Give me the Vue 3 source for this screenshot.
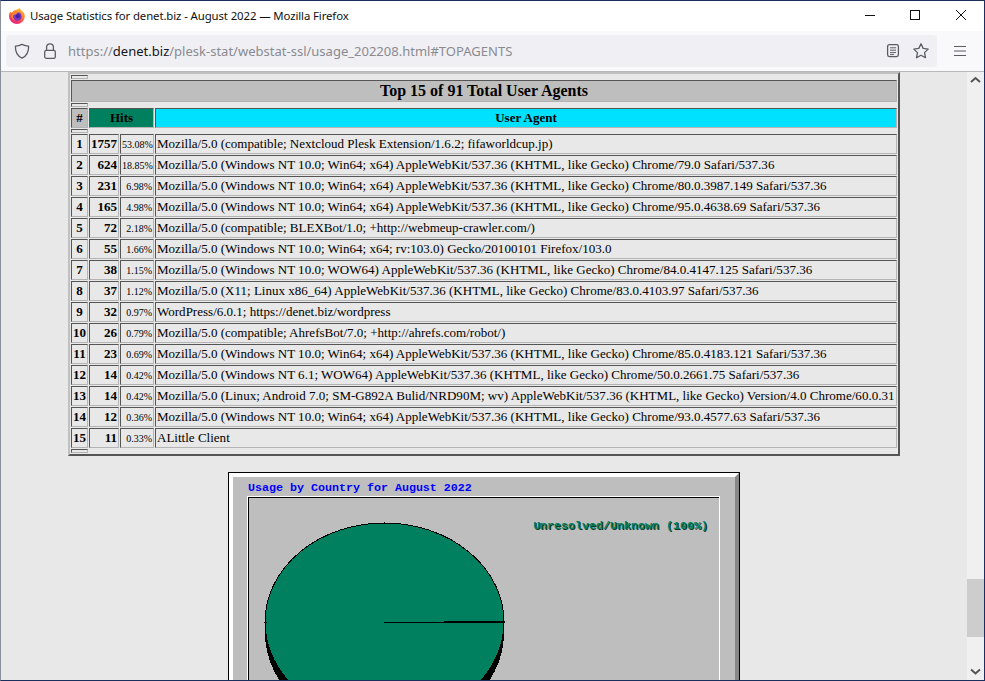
<script setup>
const rows = [
  [1, 1757, '53.08%', 'Mozilla/5.0 (compatible; Nextcloud Plesk Extension/1.6.2; fifaworldcup.jp)'],
  [2, 624, '18.85%', 'Mozilla/5.0 (Windows NT 10.0; Win64; x64) AppleWebKit/537.36 (KHTML, like Gecko) Chrome/79.0 Safari/537.36'],
  [3, 231, '6.98%', 'Mozilla/5.0 (Windows NT 10.0; Win64; x64) AppleWebKit/537.36 (KHTML, like Gecko) Chrome/80.0.3987.149 Safari/537.36'],
  [4, 165, '4.98%', 'Mozilla/5.0 (Windows NT 10.0; Win64; x64) AppleWebKit/537.36 (KHTML, like Gecko) Chrome/95.0.4638.69 Safari/537.36'],
  [5, 72, '2.18%', 'Mozilla/5.0 (compatible; BLEXBot/1.0; +http://webmeup-crawler.com/)'],
  [6, 55, '1.66%', 'Mozilla/5.0 (Windows NT 10.0; Win64; x64; rv:103.0) Gecko/20100101 Firefox/103.0'],
  [7, 38, '1.15%', 'Mozilla/5.0 (Windows NT 10.0; WOW64) AppleWebKit/537.36 (KHTML, like Gecko) Chrome/84.0.4147.125 Safari/537.36'],
  [8, 37, '1.12%', 'Mozilla/5.0 (X11; Linux x86_64) AppleWebKit/537.36 (KHTML, like Gecko) Chrome/83.0.4103.97 Safari/537.36'],
  [9, 32, '0.97%', 'WordPress/6.0.1; https://denet.biz/wordpress'],
  [10, 26, '0.79%', 'Mozilla/5.0 (compatible; AhrefsBot/7.0; +http://ahrefs.com/robot/)'],
  [11, 23, '0.69%', 'Mozilla/5.0 (Windows NT 10.0; Win64; x64) AppleWebKit/537.36 (KHTML, like Gecko) Chrome/85.0.4183.121 Safari/537.36'],
  [12, 14, '0.42%', 'Mozilla/5.0 (Windows NT 6.1; WOW64) AppleWebKit/537.36 (KHTML, like Gecko) Chrome/50.0.2661.75 Safari/537.36'],
  [13, 14, '0.42%', 'Mozilla/5.0 (Linux; Android 7.0; SM-G892A Bulid/NRD90M; wv) AppleWebKit/537.36 (KHTML, like Gecko) Version/4.0 Chrome/60.0.31'],
  [14, 12, '0.36%', 'Mozilla/5.0 (Windows NT 10.0; Win64; x64) AppleWebKit/537.36 (KHTML, like Gecko) Chrome/93.0.4577.63 Safari/537.36'],
  [15, 11, '0.33%', 'ALittle Client'],
]
</script>

<template>
  <div class="window">
    <header class="titlebar">
      <svg class="fx" width="18" height="18" viewBox="0 0 18 18">
        <defs>
          <linearGradient id="fxg" x1="0.75" y1="0" x2="0.25" y2="1">
            <stop offset="0" stop-color="#ffc12e" />
            <stop offset="0.45" stop-color="#ff7a2e" />
            <stop offset="0.8" stop-color="#f0306a" />
            <stop offset="1" stop-color="#d82a8c" />
          </linearGradient>
        </defs>
        <path d="M9.5 2.6 C10.4 1.8 11.4 1.1 12 1 C12 1.9 12.6 2.7 13.6 3.5 C15.6 5 16.8 6.9 16.8 9.2 A7.9 7.9 0 0 1 1 9.2 C1 7 1.6 5.6 2.4 4.4 C2.8 5.2 3.2 5.6 3.8 5.7 C4.8 3.9 7 2.8 9.5 2.6Z" fill="url(#fxg)" />
        <circle cx="9.3" cy="9.4" r="4.3" fill="#7a35c4" />
        <circle cx="9.9" cy="9.2" r="2.1" fill="#4a2098" />
        <path d="M3.4 9.4 C4 6 7.4 4.4 10.8 5.4 C9.4 5.8 8.4 6.6 8 7.6 C6.4 7.6 5.4 8 5 9 C5 11 6 12.6 7.6 13.4 C5.4 13.2 3.6 11.6 3.4 9.4Z" fill="#ff8a2e" />
      </svg>
      <span class="title">Usage Statistics for denet.biz - August 2022 — Mozilla Firefox</span>
      <div class="winbtns">
        <svg width="46" height="30" viewBox="0 0 46 30"><path d="M19 14.5H29" stroke="#111" fill="none" /></svg>
        <svg width="46" height="30" viewBox="0 0 46 30"><rect x="18.5" y="9.5" width="9" height="9" stroke="#111" fill="none" /></svg>
        <svg width="46" height="30" viewBox="0 0 46 30"><path d="M18 9L28 19M28 9L18 19" stroke="#111" fill="none" /></svg>
      </div>
    </header>
    <nav class="toolbar">
      <div class="urlbar">
        <svg class="shield" width="16" height="16" viewBox="0 0 16 16"><path d="M8 1.4 C10 2.4 12.2 3 14.6 3.1 C14.8 8.8 13 13 8 15.2 C3 13 1.2 8.8 1.4 3.1 C3.8 3 6 2.4 8 1.4Z" fill="none" stroke="#5b5b66" stroke-width="1.3" stroke-linejoin="round" /></svg>
        <svg class="lock" width="16" height="16" viewBox="0 0 16 16"><path d="M4.6 7.4V4.2a3.4 3.4 0 0 1 6.8 0V7.4" fill="none" stroke="#5b5b66" stroke-width="1.3" /><rect x="2.7" y="7.4" width="10.6" height="7.9" rx="1.6" fill="none" stroke="#5b5b66" stroke-width="1.3" /></svg>
        <span class="url"><span class="dim">https://</span>denet.biz<span class="dim">/plesk-stat/webstat-ssl/usage_202208.html#TOPAGENTS</span></span>
        <svg class="reader" width="16" height="16" viewBox="0 0 16 16"><rect x="2.6" y="1.6" width="10.8" height="12" rx="1.8" fill="none" stroke="#5b5b66" stroke-width="1.3" /><path d="M5 4.8H11M5 7.2H11M5 9.6H11M5 11.6H9" stroke="#5b5b66" stroke-width="1" fill="none" /></svg>
        <svg class="star" width="18" height="18" viewBox="0 0 18 18"><path d="M9 1.8L11.2 6.4L16.2 7.1L12.5 10.6L13.5 15.7L9 13.2L4.5 15.7L5.5 10.6L1.8 7.1L6.8 6.4Z" fill="none" stroke="#5b5b66" stroke-width="1.3" stroke-linejoin="round" /></svg>
      </div>
      <svg class="menu" width="14" height="12" viewBox="0 0 14 12"><path d="M1 1.5H13M1 6H13M1 10.5H13" stroke="#5b5b66" stroke-width="1.1" fill="none" /></svg>
    </nav>
    <div class="viewport">
      <main class="page">
        <table class="stats">
          <colgroup>
            <col class="c1" />
            <col class="c2" />
            <col class="c3" />
            <col />
          </colgroup>
          <tbody>
            <tr class="spacer"><th></th></tr>
            <tr><th colspan="4" class="heading">Top 15 of 91 Total User Agents</th></tr>
            <tr class="spacer"><th></th></tr>
            <tr class="head">
              <th class="grey">#</th>
              <th colspan="2" class="green">Hits</th>
              <th class="cyan">User Agent</th>
            </tr>
            <tr class="spacer"><th></th></tr>
            <tr v-for="r in rows" :key="r[0]" class="row">
              <td class="num">{{ r[0] }}</td>
              <td class="hits">{{ r[1] }}</td>
              <td class="pct">{{ r[2] }}</td>
              <td class="agent">{{ r[3] }}</td>
            </tr>
            <tr class="spacer"><th></th></tr>
          </tbody>
        </table>
        <section class="chart">
          <div class="bevel">
            <div class="chart-title">Usage by Country for August 2022</div>
            <div class="plot">
              <div class="plot-inner">
                <svg class="pie" width="260" height="180" viewBox="0 0 260 180" shape-rendering="crispEdges">
                  <ellipse cx="120.5" cy="111" rx="119.5" ry="99" fill="#000" />
                  <ellipse cx="120.5" cy="100" rx="119.5" ry="99" fill="#00805f" stroke="#000" stroke-width="1" />
                  <path d="M120 100.5H241M180 99.5H241M120.5 0V2M0 100.5H3" stroke="#000" stroke-width="1" />
                </svg>
                <span class="legend">Unresolved/Unknown (100%)</span>
              </div>
            </div>
          </div>
        </section>
      </main>
      <aside class="scrollbar">
        <svg class="arrow" width="17" height="17" viewBox="0 0 17 17"><path d="M4 10L8.5 6L13 10" stroke="#555" stroke-width="2" fill="none" /></svg>
        <div class="thumb"></div>
        <svg class="arrow down" width="17" height="17" viewBox="0 0 17 17"><path d="M4 6.5L8.5 10.5L13 6.5" stroke="#555" stroke-width="2" fill="none" /></svg>
      </aside>
    </div>
  </div>
</template>

<style>
html, body { margin: 0; padding: 0; overflow: hidden; }
</style>

<style scoped>
.window {
  width: 985px;
  height: 681px;
  box-sizing: border-box;
  border: 1px solid #1b2f5e;
  border-left-color: #8a8f99;
  display: flex;
  flex-direction: column;
  overflow: hidden;
  background: #fff;
}
.titlebar {
  height: 30px;
  flex: none;
  display: flex;
  align-items: center;
  color: #111;
}
.fx { margin-left: 7px; margin-right: 4px; margin-bottom: 1px; }
.title { flex: 1; font: 11.4px "Noto Sans", sans-serif; letter-spacing: -0.11px; margin-bottom: 1px; }
.winbtns { display: flex; }
.winbtns svg { display: block; }
.toolbar {
  height: 41px;
  flex: none;
  box-sizing: border-box;
  background: #f9f9fb;
  border-bottom: 1px solid #b8b8bc;
  display: flex;
  align-items: flex-start;
  padding: 4px 0 0 5px;
}
.urlbar {
  width: 931px;
  height: 32px;
  border-radius: 4px;
  background: #f0f0f4;
  display: flex;
  align-items: center;
}
.shield { margin-left: 8px; }
.lock { margin-left: 12px; }
.url {
  flex: 1;
  margin-left: 10px;
  font: 13.03px "Noto Sans", sans-serif;
  color: #15141a;
  white-space: nowrap;
}
.dim { color: #8a8a90; }
.star { margin-left: 11px; margin-right: 7px; }
.menu { margin-left: 16px; margin-top: 10px; }
.viewport {
  flex: 1;
  min-height: 0;
  display: flex;
  background: #e8e8e8;
  overflow: hidden;
}
.page {
  flex: 1;
  min-width: 0;
  overflow: hidden;
  padding-left: 67px;
  box-sizing: border-box;
}
.stats {
  width: 832px;
  table-layout: fixed;
  box-sizing: border-box;
  border: 2px solid;
  border-color: #c0c0c0 #555 #555 #c0c0c0;
  border-collapse: separate;
  border-spacing: 1px;
  font-family: "Liberation Serif", serif;
  color: #000;
}
.c1 { width: 17px; }
.c2 { width: 30px; }
.c3 { width: 34px; }
.stats th, .stats td {
  box-sizing: border-box;
  border: 1px solid;
  border-color: #555 #b4b4b4 #b4b4b4 #555;
  padding: 0 1px;
  overflow: hidden;
  white-space: nowrap;
}
.stats .spacer th { height: 4px; padding: 0; }
.stats tr.spacer { line-height: 0; font-size: 0; }
.heading { height: 22px; background: #bebebe; font-size: 16px; font-weight: bold; text-align: center; }
.head th { height: 20px; font-size: 13px; font-weight: bold; text-align: center; }
.stats .grey { background: #bebebe; }
.stats .green { background: #00805f; }
.stats .cyan { background: #00e0ff; }
.row td { height: 20px; font-size: 13.04px; }
.num { font-weight: bold; text-align: center; }
.hits { font-weight: bold; text-align: right; }
.stats .pct { font-size: 10px; text-align: right; }
.chart {
  width: 512px;
  height: 300px;
  margin: 16px 0 0 160px;
  box-sizing: border-box;
  border: 1px solid #000;
}
.bevel {
  height: 100%;
  box-sizing: border-box;
  background: #bebebe;
  border: 4px solid;
  border-color: #fff #888 #888 #fff;
  padding-left: 14px;
}
.chart-title {
  font: bold 11.67px/19px "Liberation Mono", monospace;
  color: #0000ff;
  height: 17px;
  padding: 2px 0 0 1px;
  box-sizing: content-box;
}
.plot {
  width: 473px;
  height: 240px;
  box-sizing: border-box;
  border: 1px solid #fff;
}
.plot-inner {
  position: relative;
  height: 100%;
  box-sizing: border-box;
  border: 1px solid #000;
  border-width: 1px 0 0 1px;
}
.pie { display: block; position: absolute; left: 15px; top: 24px; }
.legend {
  position: absolute;
  right: 11px;
  top: 21px;
  font: bold 11.67px/14px "Liberation Mono", monospace;
  color: #00805f;
  text-shadow: 1px 1px 0 #0a3a2c;
}
.scrollbar {
  width: 17px;
  flex: none;
  background: #f0f0f0;
  display: flex;
  flex-direction: column;
  align-items: center;
  position: relative;
}
.arrow { display: block; }
.thumb { position: absolute; left: 0; right: 0; top: 507px; height: 58px; background: #cdcdcd; }
.down { margin-top: auto; }
</style>
